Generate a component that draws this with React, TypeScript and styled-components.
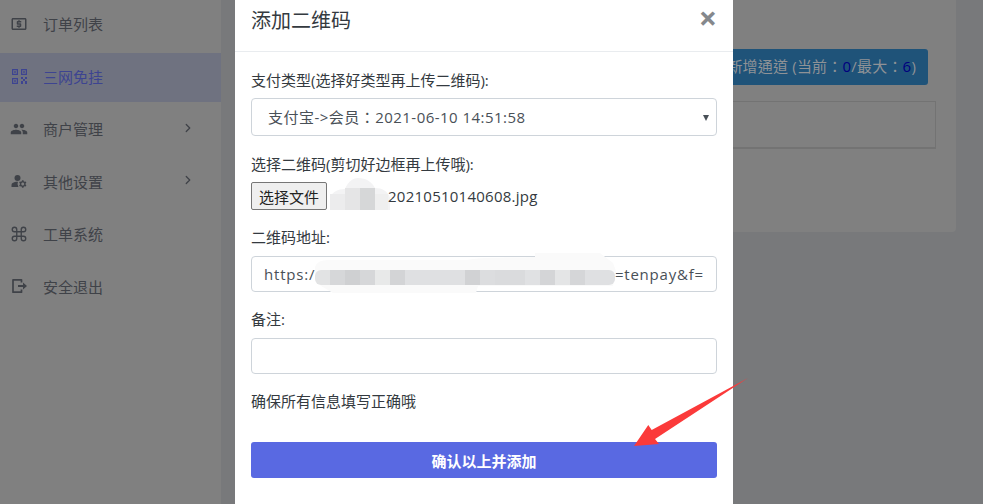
import React from "react";
import styled, { createGlobalStyle } from "styled-components";
import { MdOutlineLocalAtm, MdPeople, MdManageAccounts } from "react-icons/md";
import { Command, ChevronRight } from "lucide-react";

const FONT = `"Open Sans", "Noto Sans CJK SC", sans-serif`;
// TC puts the full-width colon in the middle of its cell, as the reference does
const FONT_TC = `"Open Sans", "Noto Sans CJK TC", sans-serif`;

const QrIcon = () => (
  <svg viewBox="0 0 18 18" fill="currentColor">
    <path fillRule="evenodd" d="M2 2h6v6H2zM3.2 3.2v3.6h3.6V3.2zM11 2h6v6h-6zM12.2 3.2v3.6h3.6V3.2zM2 11h6v6H2zM3.2 12.2v3.6h3.6v-3.6z" />
    <rect x="4.2" y="4.2" width="1.6" height="1.6" />
    <rect x="13.2" y="4.2" width="1.6" height="1.6" />
    <rect x="4.2" y="13.2" width="1.6" height="1.6" />
    <path d="M11 10h2v2h-2zM15 10h2v2h-2zM13 12h2v2h-2zM11 14h2v3h-2zM15 14h2v3h-2z" />
  </svg>
);

const ExitIcon = () => (
  <svg viewBox="0 0 18 18" fill="none" stroke="currentColor">
    <path d="M11.5 5.5V2.8H3v12.4h8.5v-2.7" strokeWidth="1.7" strokeLinejoin="round" />
    <path d="M8 8h5V5.4L17 9l-4 3.6V10H8z" fill="currentColor" strokeWidth="0" />
  </svg>
);

const menu = [
  { label: "订单列表", icon: <MdOutlineLocalAtm /> },
  { label: "三网免挂", icon: <QrIcon />, active: true },
  { label: "商户管理", icon: <MdPeople />, more: true },
  { label: "其他设置", icon: <MdManageAccounts />, more: true },
  { label: "工单系统", icon: <Command strokeWidth={1.8} /> },
  { label: "安全退出", icon: <ExitIcon /> },
];

// redacted part of the address: [x, width, colour]
const urlCells: [number, number, string][] = [
  [2, 15, "#e2e3e4"], [17, 15, "#d6d7d9"], [32, 15, "#cfd0d2"], [47, 15, "#d6d7d9"], [62, 15, "#e8e9e9"],
  [77, 15, "#d3d4d6"], [92, 60, "#dfe0e2"], [152, 15, "#d1d2d4"], [167, 15, "#dcdddf"], [182, 30, "#dadbdd"],
  [212, 15, "#e0e1e3"], [227, 15, "#d4d5d7"], [242, 15, "#e4e5e6"], [257, 15, "#d5d6d8"], [272, 30, "#dfe0e2"],
];

const App: React.FC = () => {
  return (
    <Page>
      <GlobalStyle />
      <Sidebar>
        {menu.map((item) => (
          <MenuRow key={item.label} $active={item.active}>
            <MenuIcon>{item.icon}</MenuIcon>
            <span>{item.label}</span>
            {item.more && (
              <MenuArrow>
                <ChevronRight size={14} strokeWidth={2.2} />
              </MenuArrow>
            )}
          </MenuRow>
        ))}
      </Sidebar>
      <Main>
        <Card>
          <AddButton>
            新增通道 (当前：<Count>0</Count>/最大：<Count>6</Count>)
          </AddButton>
          <TableBox />
        </Card>
      </Main>

      <Modal>
        <ModalHeader>
          <ModalTitle>添加二维码</ModalTitle>
          <CloseButton>×</CloseButton>
        </ModalHeader>
        <ModalBody>
          <Label>支付类型(选择好类型再上传二维码):</Label>
          <SelectWrap>
            <Select defaultValue="a">
              <option value="a">支付宝-&gt;会员：2021-06-10 14:51:58</option>
            </Select>
          </SelectWrap>

          <Label>选择二维码(剪切好边框再上传哦):</Label>
          <FileRow>
            <FileButton>选择文件</FileButton>
            <FileMask width="60" height="32" viewBox="0 0 60 32">
              <path d="M0 32 L0 20 C2 14 8 11 15 11 C18 3 24 0 28 0 C36 0 42 4 45 10 C52 10 58 13 60 20 L60 32 Z" fill="#f3f3f4" />
              <rect x="0" y="16" width="15" height="16" fill="#ececed" />
              <rect x="15" y="10" width="15" height="22" fill="#e5e5e6" />
              <rect x="30" y="10" width="15" height="22" fill="#d6d7d8" />
              <rect x="45" y="16" width="13" height="16" fill="#efefef" />
            </FileMask>
            <FileName>20210510140608.jpg</FileName>
          </FileRow>

          <Label $top={16}>二维码地址:</Label>
          <UrlField>
            <span>https:/</span>
            <span>=tenpay&amp;f=</span>
            <UrlMask width="304" height="42" viewBox="0 0 304 42">
              <defs>
                <clipPath id="url-strip">
                  <rect x="2" y="17" width="300" height="15" rx="6" />
                </clipPath>
              </defs>
              <path d="M2 14 Q4 7 15 7 L154 7 C170 4 200 5 222 4 L222 0 L287 0 L300 10 L303 18 L300 33 L165 33 L163 40 L20 40 L8 33 L2 24 Z" fill="#fafafa" />
              <g clipPath="url(#url-strip)">
                {urlCells.map(([x, w, c]) => (
                  <rect key={x} x={x} y={17} width={w} height={15} fill={c} />
                ))}
              </g>
            </UrlMask>
          </UrlField>

          <Label $top={16}>备注:</Label>
          <TextInput />

          <Hint>确保所有信息填写正确哦</Hint>
          <Submit>确认以上并添加</Submit>
        </ModalBody>
      </Modal>
      <Arrow width="120" height="80" viewBox="0 0 120 80">
        <polygon points="1,76 15.3,55 18.7,60 115,8 22,69 26,74" fill="#fb3a3a" />
      </Arrow>
    </Page>
  );
};

export default App;

const GlobalStyle = createGlobalStyle`
  html, body {
    margin: 0;
    height: 504px;
    overflow: hidden;
    font-family: ${FONT};
    font-size: 15px;
  }
  * {
    box-sizing: border-box;
  }
`;

const Page = styled.div`
  position: relative;
  display: flex;
  width: 983px;
  height: 504px;
  overflow: hidden;
  background-color: #78797b;
`;

const Sidebar = styled.nav`
  display: flex;
  flex-direction: column;
  gap: 3.5px;
  width: 221px;
  flex-shrink: 0;
  background-color: #808080;
`;

const MenuRow = styled.div<{ $active?: boolean }>`
  display: flex;
  align-items: center;
  height: 49px;
  padding: 0 0 2px 10px;
  color: ${({ $active }) => ($active ? "#3d4491" : "#3f4248")};
  background-color: ${({ $active }) => ($active ? "#6f7280" : "transparent")};
`;

const MenuIcon = styled.span`
  display: flex;
  justify-content: center;
  width: 18px;
  margin-right: 15px;
  font-size: 18px;
  & > svg {
    width: 18px;
    height: 18px;
  }
`;

const MenuArrow = styled.span`
  display: flex;
  margin-left: auto;
  margin-right: 26px;
  margin-bottom: 2px;
`;

const Main = styled.main`
  flex: 1;
  padding: 0 27px 0 14px;
`;

const Card = styled.section`
  display: flex;
  flex-direction: column;
  align-items: flex-end;
  height: 232px;
  padding: 49px 20px 0 0;
  background-color: #808080;
  border-radius: 0 0 4px 4px;
`;

const AddButton = styled.div`
  width: 300px;
  height: 36px;
  margin-right: 8px;
  padding-right: 12px;
  line-height: 35px;
  text-align: right;
  font-family: ${FONT_TC};
  letter-spacing: 0.2px;
  color: #8f9296;
  background-color: #1f5379;
  border-radius: 3px;
`;

const Count = styled.span`
  color: #00007f;
`;

const TableBox = styled.div`
  width: 500px;
  height: 48px;
  margin-top: 16px;
  border: 1px solid #737373;
  border-bottom-width: 2px;
`;

const Modal = styled.div`
  position: absolute;
  top: 0;
  left: 235px;
  width: 498px;
  height: 504px;
  background-color: #fff;
`;

const ModalHeader = styled.header`
  display: flex;
  align-items: flex-start;
  justify-content: space-between;
  height: 52px;
  padding: 7px 16px 0;
  border-bottom: 1px solid #e9ecef;
`;

const ModalTitle = styled.h5`
  margin: 0;
  font-size: 20px;
  font-weight: 400;
  line-height: 28px;
  color: #343a40;
`;

const CloseButton = styled.span`
  margin-top: -5px;
  font-size: 32px;
  font-weight: 700;
  line-height: 32px;
  color: #85888c;
`;

const ModalBody = styled.div`
  padding: 17px 16px 0;
`;

const Label = styled.label<{ $top?: number }>`
  display: block;
  height: 22px;
  margin-top: ${({ $top }) => $top ?? 0}px;
  line-height: 22px;
  color: #343a40;
`;

const SelectWrap = styled.div`
  position: relative;
  margin: 7px 0 17px;
  &::after {
    content: "";
    position: absolute;
    top: 17px;
    right: 8px;
    border-left: 3.5px solid transparent;
    border-right: 3.5px solid transparent;
    border-top: 6px solid #495057;
  }
`;

const Select = styled.select`
  display: block;
  width: 100%;
  height: 38px;
  padding: 0 16px;
  font-family: ${FONT_TC};
  font-size: 15px;
  letter-spacing: 0.47px;
  color: #495057;
  background-color: #fff;
  border: 1px solid #ced4da;
  border-radius: 4px;
  appearance: none;
`;

const FileRow = styled.div`
  display: flex;
  align-items: center;
  height: 28px;
  margin-top: 7px;
`;

const FileButton = styled.button`
  flex-shrink: 0;
  width: 76px;
  height: 28px;
  margin-right: 3px;
  padding: 0;
  font-family: ${FONT};
  font-size: 15px;
  color: #222;
  background-color: #efefef;
  border: 1px solid #767676;
  border-radius: 2px;
`;

const FileMask = styled.svg`
  flex-shrink: 0;
  align-self: flex-end;
`;

const FileName = styled.span`
  margin-left: -2px;
  letter-spacing: 0.25px;
  color: #343a40;
`;

const UrlField = styled.div`
  position: relative;
  display: flex;
  align-items: center;
  justify-content: space-between;
  height: 36px;
  margin-top: 8px;
  padding: 0 12px;
  letter-spacing: 0.8px;
  color: #495057;
  background-color: #fff;
  border: 1px solid #ced4da;
  border-radius: 4px;
`;

const UrlMask = styled.svg`
  position: absolute;
  top: -4px;
  left: 61px;
`;

const TextInput = styled.input`
  display: block;
  width: 100%;
  height: 36px;
  margin-top: 8px;
  background-color: #fff;
  border: 1px solid #ced4da;
  border-radius: 4px;
`;

const Hint = styled.p`
  height: 22px;
  margin: 16px 0 30px;
  line-height: 22px;
  color: #343a40;
`;

const Submit = styled.button`
  display: block;
  width: 100%;
  height: 36px;
  padding: 0;
  font-family: ${FONT};
  font-size: 15px;
  font-weight: 700;
  color: #fff;
  background-color: #5969e2;
  border: 0;
  border-radius: 3px;
`;

const Arrow = styled.svg`
  position: absolute;
  top: 370px;
  left: 633px;
`;
